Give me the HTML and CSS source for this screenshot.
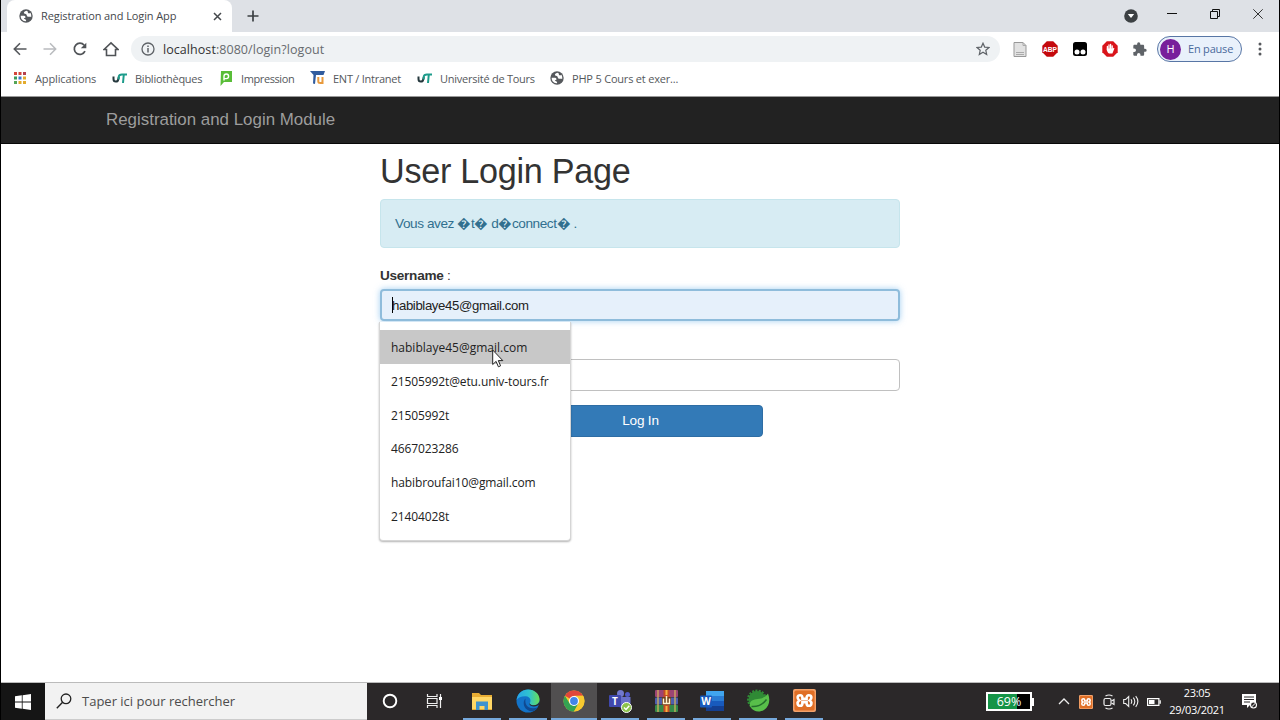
FILE: index.html
```html
<!DOCTYPE html>
<html lang="fr">
<head>
  <meta charset="UTF-8" />
  <title>Registration and Login App</title>
  <link rel="stylesheet" href="styles.css">
</head>
<body>

  <!-- Shared icons -->
  <svg class="defs" width="0" height="0">
    <symbol id="globe" viewBox="0 0 14 14">
      <circle cx="7" cy="7" r="6.7" fill="#56595d"/>
      <path d="M1.700 6.800C3.500 7 5.300 6.500 6.300 7.600c.8 1-.4 1.600-1.500 1.900.9.800 2 .9 2.300 1.700.2.500-.2 1-.8 1.100C3.500 12 1.500 9.600 1.700 6.800zM8 1.700C6.300 2 4.700 2.900 4.900 4c.2 1 1.900.8 2.500 1.500.7.8.2 1.600 1.100 2.100 1.100.5 2.400-.2 3.700.5.200-1.500.1-2.900-.9-4.300-.7.6-1.500.9-2.100.3-.6-.7.100-1.300-1.200-2.400z" fill="#fff"/>
    </symbol>
    <symbol id="ut" viewBox="0 0 16 12">
      <path d="M1.500 4.500v2.500c0 3.500 4.300 3.300 4.700.5L6.800 5" fill="none" stroke="#25383d" stroke-width="2"/>
      <path d="M6.700 7.500V5.500c0-2.300 1.300-3 3.300-3h5M11.800 2.500L11 11" fill="none" stroke="#1d9c8b" stroke-width="2"/>
    </symbol>
    <symbol id="xampp" viewBox="0 0 24 24">
      <rect width="24" height="24" rx="2" fill="#f3a26b"/>
      <rect x="1.500" y="1.500" width="21" height="21" rx="2" fill="#e06f26"/>
      <path d="M9.800 10.300h4.400V9.200c0-1.900 1-2.700 2.300-2.700 3.400 0 3.400 3.700 1 5.500 2.400 1.800 2.400 5.500-1 5.500-1.300 0-2.300-.8-2.300-2.700v-1.100H9.800v1.100c0 1.900-1 2.700-2.300 2.700-3.400 0-3.400-3.700-1-5.500-2.400-1.800-2.400-5.500 1-5.500 1.300 0 2.300.8 2.300 2.700z" fill="none" stroke="#fff" stroke-width="2.700"/>
    </symbol>
  </svg>

  <div class="window">

    <!-- Tabs -->
    <div class="tabs">
      <div class="tab">
        <svg class="favicon" width="14" height="14"><use href="#globe"/></svg>
        <span class="tab-title">Registration and Login App</span>
        <svg class="tab-close" width="9" height="9" viewBox="0 0 9 9"><path d="M1 1l7 7M8 1L1 8" stroke="#45484c" stroke-width="1.500"/></svg>
      </div>
      <svg class="new-tab" width="12" height="12" viewBox="0 0 12 12"><path d="M6 .5v11M.5 6h11" stroke="#3c4043" stroke-width="1.700"/></svg>
      <div class="controls">
        <svg width="14" height="14" viewBox="0 0 14 14"><circle cx="7" cy="7" r="6.800" fill="#3c4043"/><path d="M3.800 5h6.400L7 9z" fill="#fff"/></svg>
        <svg width="10" height="10" viewBox="0 0 10 10"><path d="M0 4.500h10" stroke="#111"/></svg>
        <svg width="10" height="10" viewBox="0 0 10 10"><path d="M.5 2.500h7v7h-7zM2.500 2.500v-2h7v7h-2" fill="none" stroke="#111"/></svg>
        <svg width="10" height="10" viewBox="0 0 10 10"><path d="M.3.300l9.400 9.400M9.700.300L.3 9.700" stroke="#333"/></svg>
      </div>
    </div>

    <!-- Address bar -->
    <div class="toolbar">
      <div class="nav-icons">
        <svg width="14" height="14" viewBox="0 0 14 14"><path d="M13.500 7H1.500M7 1.300L1.300 7 7 12.700" fill="none" stroke="#55585c" stroke-width="1.600"/></svg>
        <svg width="14" height="14" viewBox="0 0 14 14"><path d="M.5 7h12M7 1.300L12.700 7 7 12.700" fill="none" stroke="#b9bbbe" stroke-width="1.500"/></svg>
        <svg width="14" height="14" viewBox="0 0 14 14"><path d="M12 9.200A5.600 5.600 0 1 1 11.200 3.200" fill="none" stroke="#505357" stroke-width="1.700"/><path d="M13.300.7v5.500H7.800z" fill="#505357"/></svg>
        <svg width="16" height="16" viewBox="0 0 16 16"><path d="M1 8.500L8 1.800l7 6.700h-2.500v6h-9v-6H1z" fill="none" stroke="#505357" stroke-width="1.600"/></svg>
      </div>
      <div class="url">
        <svg width="14" height="14" viewBox="0 0 14 14"><circle cx="7" cy="7" r="6" fill="none" stroke="#5f6368" stroke-width="1.300"/><path d="M7 6v4.500M7 3.500V5" stroke="#5f6368" stroke-width="1.500"/></svg>
        <span class="address">localhost<i>:8080/login?logout</i></span>
        <svg width="14" height="14" viewBox="0 0 14 14"><path d="M7 1.200l1.700 3.900 4.300.4-3.200 2.800.9 4.200L7 10.300l-3.700 2.200.9-4.200L1 5.500l4.300-.4z" fill="none" stroke="#5f6368" stroke-width="1.200"/></svg>
      </div>
      <div class="extensions">
        <svg width="14" height="15" viewBox="0 0 14 15"><path d="M1 .5h9l3 3v11H1z" fill="#e2e2e2" stroke="#999"/><path d="M10 .5v3h3M3 10.500h8M3 12.500h8" fill="none" stroke="#aaa"/></svg>
        <svg width="16" height="16" viewBox="0 0 16 16"><path d="M4.800.3h6.400l4.500 4.500v6.400l-4.500 4.500H4.800L.3 11.200V4.800z" fill="#c4090d"/><text x="8" y="10.700" text-anchor="middle" textLength="14" lengthAdjust="spacingAndGlyphs" class="abp">ABP</text></svg>
        <svg width="14" height="14" viewBox="0 0 14 14"><rect width="14" height="14" rx="2.500"/><circle cx="4" cy="10" r="2.500" fill="#fff"/><circle cx="10" cy="10" r="2.500" fill="#fff"/></svg>
        <svg width="16" height="16" viewBox="0 0 16 16"><path d="M4.800.3h6.400l4.500 4.500v6.400l-4.500 4.500H4.800L.3 11.200V4.800z" fill="#d9151b"/><path d="M5.400 9V5.500M7 8.500V3.800M8.600 8.500V3.500M10.200 9V4.800" stroke="#fff" stroke-width="1.300" stroke-linecap="round"/><path d="M4.800 7.500h6.100l1-.8.500.8-2 5H7C5.500 11.500 4.800 10 4.800 7.500z" fill="#fff"/></svg>
        <svg width="14" height="14" viewBox="0 0 22 22"><path d="M19 10.500h-1.500v-4c0-1.100-.9-2-2-2h-4V3a2.500 2.500 0 0 0-5 0v1.500h-4c-1.100 0-2 .9-2 2v3.800H2a2.700 2.700 0 0 1 0 5.400H.5v3.800c0 1.100.9 2 2 2h3.800V20a2.700 2.700 0 0 1 5.400 0v1.500h3.800c1.100 0 2-.9 2-2v-4H19a2.500 2.500 0 0 0 0-5z" fill="#5f6368"/></svg>
      </div>
      <div class="profile">
        <span class="avatar">H</span>
        <span class="profile-text">En pause</span>
      </div>
      <svg class="menu-dots" width="4" height="14" viewBox="0 0 4 14"><circle cx="2" cy="2" r="1.500"/><circle cx="2" cy="7" r="1.500"/><circle cx="2" cy="12" r="1.500"/></svg>
    </div>

    <!-- Bookmarks -->
    <div class="bookmarks">
      <div class="bookmark apps">
        <svg width="14" height="14" viewBox="0 0 14 14">
          <path d="M1 1h3v3H1zM5.500 1h3v3h-3z" fill="#d4453b"/><path d="M10 1h3v3h-3z" fill="#b5404d"/>
          <path d="M1 5.500h3v3H1z" fill="#3c9a58"/><path d="M5.500 5.500h3v3h-3z" fill="#3c78c8"/><path d="M10 5.500h3v3h-3zM5.500 10h3v3h-3zM10 10h3v3h-3z" fill="#e3ab2c"/><path d="M1 10h3v3H1z" fill="#54a456"/>
        </svg>
        <span>Applications</span>
      </div>
      <div class="bookmark biblio">
        <svg width="16" height="12"><use href="#ut"/></svg>
        <span>Bibliothèques</span>
      </div>
      <div class="bookmark impression">
        <svg width="12" height="15" viewBox="0 0 12 15"><path d="M1 0h11v11H4l-3.500 4z" fill="#59bd38"/><path d="M4 9.500V5.300a2.300 2.300 0 1 1 2.300 2.300H4" fill="none" stroke="#fff" stroke-width="1.400"/></svg>
        <span>Impression</span>
      </div>
      <div class="bookmark ent">
        <svg width="15" height="14" viewBox="0 0 15 14"><path d="M0 0h15l-1.500 4H6L5 13 3 12.500 3.500 4z" fill="#315c9e"/><path d="M8.300 6v4.500c0 2 4.200 2 4.200 0V6M12.500 10v3" fill="none" stroke="#e89a3c" stroke-width="2"/></svg>
        <span>ENT / Intranet</span>
      </div>
      <div class="bookmark univ">
        <svg width="16" height="12"><use href="#ut"/></svg>
        <span>Université de Tours</span>
      </div>
      <div class="bookmark php">
        <svg width="14" height="14"><use href="#globe"/></svg>
        <span>PHP 5 Cours et exer...</span>
      </div>
    </div>

    <!-- Page -->
    <div class="navbar"><a class="navbar-brand">Registration and Login Module</a></div>
    <div class="page">
      <div class="login">
        <h1>User Login Page</h1>
        <div class="alert">Vous avez &#xFFFD;t&#xFFFD; d&#xFFFD;connect&#xFFFD; .</div>
        <div class="form-group">
          <label><b>Username</b> :</label>
          <div class="field focused">
            <span class="caret"></span><span class="value">habiblaye45@gmail.com</span>
            <div class="suggestions">
              <div class="option active"><span>habiblaye45@gmail.com</span></div>
              <div class="option"><span>21505992t@etu.univ-tours.fr</span></div>
              <div class="option"><span>21505992t</span></div>
              <div class="option"><span>4667023286</span></div>
              <div class="option"><span>habibroufai10@gmail.com</span></div>
              <div class="option"><span>21404028t</span></div>
              <svg class="cursor" width="12" height="19" viewBox="0 0 12 19"><path d="M.7 1v14.500l3.400-3.100 2.300 5.400 2.200-1-2.300-5.200h4.500z" fill="#fff" stroke="#222" stroke-width="1"/></svg>
            </div>
          </div>
        </div>
        <div class="field password"></div>
        <button class="login-btn">Log In</button>
      </div>
    </div>
  </div>

  <!-- Windows taskbar -->
  <div class="taskbar">
    <div class="start">
      <svg width="16" height="16" viewBox="0 0 16 16"><path d="M0 2.300l6.800-1v6.300H0zM7.600 1.200L16 0v7.600H7.600zM0 8.400h6.800v6.300l-6.800-1zM7.600 8.400H16V16l-8.400-1.200z" fill="#fff"/></svg>
    </div>
    <div class="search">
      <svg width="16" height="16" viewBox="0 0 16 16"><circle cx="10" cy="5.800" r="4.800" fill="none" stroke="#222" stroke-width="1.300"/><path d="M6.600 9.300L.8 15.200" stroke="#222" stroke-width="1.400"/></svg>
      <span>Taper ici pour rechercher</span>
    </div>
    <div class="app">
      <svg width="16" height="16" viewBox="0 0 16 16"><circle cx="8" cy="8" r="6.300" fill="none" stroke="#fff" stroke-width="1.900"/></svg>
    </div>
    <div class="app task-view">
      <svg width="17" height="16" viewBox="0 0 17 16"><path d="M1.500 1v2.500h9.500V1M1.500 15v-2.500h9.500V15M1.500 5.500h9.500v5h-9.500zM14.500 1v14" fill="none" stroke="#eee" stroke-width="1.200"/><path d="M13 4h3v3h-3z" fill="#fff"/></svg>
    </div>
    <div class="app open">
      <svg width="22" height="20" viewBox="0 0 22 20"><path d="M1 2h7l2 2h11v15H1z" fill="#e8ad34"/><path d="M1 6h20v12H1z" fill="#ffd766"/><path d="M5 10.500h12V19h-3.500v-4h-5v4H5z" fill="#3f93cf"/></svg>
    </div>
    <div class="app open">
      <svg width="24" height="24" viewBox="0 0 24 24">
        <defs>
          <linearGradient id="edgeTop" x1="0" x2="1"><stop offset="0" stop-color="#27a4e8"/><stop offset=".55" stop-color="#2fc3cf"/><stop offset="1" stop-color="#69df55"/></linearGradient>
        </defs>
        <circle cx="12" cy="12" r="11.500" fill="#1373c8"/>
        <path d="M.6 11C1.500 4.500 6.500.5 12.200.5c6.300 0 11.300 4.500 11.300 9.800 0 4-3 6-6 6-3.200 0-4.500-1.200-3.700-2.300 1.500-2 .8-6.500-4-6.800C5.500 7 2 8.500.6 11z" fill="url(#edgeTop)"/>
        <path d="M9.500 9.500c-3 3-2.500 10 4 12.500 3 1 6.500-.3 8.500-3.800-5 2.300-10.500.8-12-3-.8-2-.7-3.700-.5-5.700z" fill="#104a92"/>
        <path d="M23.500 15c-1.500 2-5.500 3.200-8.500 1.800-1.600-.7-1.800-1.800-1.200-2.800 0 1.500 2 2.300 4 2.300 2.200 0 4.500-1 5.700-3.500z" fill="#2b2829"/>
      </svg>
    </div>
    <div class="app open current">
      <svg width="22" height="22" viewBox="0 0 22 22">
        <circle cx="11" cy="11" r="10.500" fill="#f7c92f"/>
        <path d="M11 11L1.900 5.750A10.500 10.500 0 0 1 20.100 5.750L11 6z" fill="#e0463a"/>
        <path d="M1.900 5.750A10.500 10.500 0 0 0 11 21.500L15.500 13.500 11 11 6.700 13.500z" fill="#34a352"/>
        <path d="M11 5.800h9.100a10.500 10.500 0 0 1-9.100 15.700l4.500-8z" fill="#f7c92f"/>
        <circle cx="11" cy="11" r="5" fill="#fff"/><circle cx="11" cy="11" r="3.900" fill="#4285e8"/>
      </svg>
    </div>
    <div class="app open">
      <svg width="24" height="24" viewBox="0 0 24 24">
        <circle cx="12.500" cy="4.500" r="3.500" fill="#7178cf"/><circle cx="19.500" cy="5.500" r="2.500" fill="#5059c9"/>
        <path d="M9 8h13.500v6c0 3-2 5-4.500 5h-3c-4 0-6-3-6-6z" fill="#6970ca"/><rect x="1" y="6" width="12" height="12" rx="1" fill="#4048ad"/>
        <text x="7" y="15.500" text-anchor="middle" class="app-letter">T</text>
        <circle cx="18.500" cy="18.500" r="5" fill="#8bc34a" stroke="#fff"/><path d="M16 18.500l2 2 3.300-3.800" fill="none" stroke="#fff" stroke-width="1.400"/>
      </svg>
    </div>
    <div class="app open">
      <svg width="23" height="22" viewBox="0 0 23 22">
        <rect y="0" width="23" height="7" rx="1" fill="#9c4474"/><rect y="7.500" width="23" height="7" rx="1" fill="#4d5fae"/><rect y="15" width="23" height="7" rx="1" fill="#358a49"/>
        <path d="M3 0v22M20 0v22" stroke="#d2b05d" stroke-width="1.300"/><path d="M8.500 0h6v22h-6z" fill="#c74b22"/><path d="M7 7h9v8H7z" fill="#6d3d19"/><path d="M8.500 8.500v5h6v-5M11.500 6v8" fill="none" stroke="#fff2ce" stroke-width="1.500"/><path d="M11.500 0v5M11.500 16v6" stroke="#f5b343" stroke-width="2"/>
      </svg>
    </div>
    <div class="app open">
      <svg width="24" height="22" viewBox="0 0 24 22">
        <rect x="6" y="1" width="18" height="20" rx="1" fill="#2b7cd3"/><path d="M6 1h18v5H6z" fill="#41a5ee"/><path d="M6 11h18v5H6z" fill="#185abd"/><path d="M6 16h18v5H6z" fill="#143f91"/><rect x="0" y="5.500" width="12" height="12" rx="1" fill="#185abd"/>
        <text x="6" y="15" text-anchor="middle" class="app-letter">W</text>
      </svg>
    </div>
    <div class="app open">
      <svg width="24" height="24" viewBox="0 0 24 24">
        <circle cx="11" cy="10.500" r="8.500" fill="#2f8a35"/><circle cx="11" cy="10.500" r="8.800" fill="none" stroke="#2f8a35" stroke-width="2.400" stroke-dasharray="2 1.300"/>
        <path d="M22 4.500c2.500 6 1.500 13-4 16.500-5 2.800-11 1.500-13.500-3C2 13 6.500 10.500 11.500 10c5-.5 8-2 10.500-5.500z" fill="#58bf4a"/><path d="M5.500 17.500c6 .5 11-1.500 15-7" fill="none" stroke="#24702c" stroke-width="1.500"/>
      </svg>
    </div>
    <div class="app open">
      <svg width="23" height="23"><use href="#xampp"/></svg>
    </div>

    <div class="tray">
      <div class="battery"><span>69%</span></div>
      <svg class="chevron" width="12" height="7" viewBox="0 0 12 7"><path d="M1 6l5-5 5 5" fill="none" stroke="#eee" stroke-width="1.300"/></svg>
      <svg class="tray-xampp" width="14" height="14"><use href="#xampp"/></svg>
      <svg class="meet" width="12" height="16" viewBox="0 0 12 16"><rect x="1" y="4.500" width="7" height="7" rx="1.500" fill="none" stroke="#eee" stroke-width="1.200"/><path d="M8.500 7l2.500-1.500v5L8.500 9M2.500 2Q6 0 9.500 2M2.500 14q3.500 2 7 0" fill="none" stroke="#eee" stroke-width="1.200"/></svg>
      <svg class="volume" width="16" height="13" viewBox="0 0 16 13"><path d="M.7 4.500h2l3-3v10l-3-3h-2zM8 4.300q1.500 2.200 0 4.400M10.300 2.700q3 3.800 0 7.600M12.700 1.200q4.300 5.300 0 10.600" fill="none" stroke="#eee" stroke-width="1.100"/></svg>
      <svg class="power" width="14" height="8" viewBox="0 0 14 8"><path d="M.6.600h11.300v6.800H.6z" fill="none" stroke="#fff" stroke-width="1.200"/><path d="M2 2h5.500v4H2zM12.500 2.300h1.300v3.400h-1.300z" fill="#fff"/></svg>
      <div class="clock"><span class="time">23:05</span><span class="date">29/03/2021</span></div>
      <svg class="notif" width="17" height="17" viewBox="0 0 17 17"><path d="M1 1h14v11h-6l-3 3v-3H1z" fill="#fff"/><path d="M3 4h10M3 6.500h10M3 9h6" stroke="#2b2829"/><circle cx="12.500" cy="12" r="3" fill="#2b2829" stroke="#fff" stroke-width="1.100"/><path d="M10.500 14l4-4" stroke="#fff"/></svg>
    </div>
  </div>

</body>
</html>
```
FILE: styles.css
```css
* {
  margin: 0;
  padding: 0;
  box-sizing: border-box;
}

body {
  width: 1280px;
  height: 720px;
  overflow: hidden;
  display: flex;
  flex-direction: column;
  background: #fff;
  border-left: 1px solid #000;
  border-right: 1px solid #000;
  font-family: 'Open Sans', 'Noto Sans', sans-serif;
}

svg {
  display: block;
  flex: none;
}

.defs {
  position: absolute;
}

span, a {
  white-space: nowrap;
}

.window {
  flex: 1;
  min-height: 0;
  display: flex;
  flex-direction: column;
}

/* Tabs */
.tabs {
  height: 32px;
  background: #dee1e6;
  display: flex;
  align-items: center;
}

.tab {
  width: 225px;
  height: 32px;
  margin-left: 6px;
  padding: 0 10px 0 12px;
  background: #fff;
  border-radius: 8px 8px 0 0;
  display: flex;
  align-items: center;
}

.tab-title {
  margin-left: 8px;
  margin-top: -1px;
  font-size: 11px;
  letter-spacing: -0.1px;
  color: #45484c;
}

.tab-close {
  margin-left: auto;
}

.new-tab {
  margin-left: 15px;
}

.controls {
  margin-left: auto;
  margin-right: 16px;
  display: flex;
  align-items: center;
  gap: 33px;
}

.controls svg {
  margin-top: -5px;
}

.controls svg:first-child {
  margin-top: 0;
  margin-right: -4px;
}

/* Address bar */
.toolbar {
  height: 34px;
  display: flex;
  align-items: center;
}

.nav-icons {
  width: 130px;
  padding-left: 12px;
  display: flex;
  align-items: center;
  gap: 16px;
}

.url {
  width: 869px;
  height: 26px;
  padding: 0 10px;
  border-radius: 13px;
  background: #eff2f4;
  display: flex;
  align-items: center;
}

.address {
  flex: 1;
  margin-left: 8px;
  font-size: 12.5px;
  letter-spacing: 0.06px;
  color: #333;
}

.address i {
  font-style: normal;
  color: #686b6f;
}

.extensions {
  width: 157px;
  padding-left: 13px;
  display: flex;
  align-items: center;
  gap: 15px;
}

.abp {
  font: bold 6.5px 'Liberation Sans', sans-serif;
  fill: #fff;
}

.profile {
  width: 85px;
  height: 26px;
  padding-left: 2px;
  border: 1px solid #5876a5;
  border-radius: 13px;
  background: #e9f1fb;
  display: flex;
  align-items: center;
}

.avatar {
  width: 21px;
  height: 21px;
  border-radius: 50%;
  background: #781f9b;
  color: #fff;
  font-size: 11px;
  line-height: 20px;
  text-align: center;
}

.profile-text {
  margin-left: 7px;
  margin-top: -1px;
  font-size: 11px;
  letter-spacing: -0.2px;
  color: #49699b;
}

.menu-dots {
  margin-left: 16px;
  fill: #55585c;
}

/* Bookmarks */
.bookmarks {
  height: 31px;
  padding: 0 0 6px 12px;
  border-bottom: 1px solid #999;
  display: flex;
  align-items: center;
}

.bookmark {
  display: flex;
  align-items: center;
  gap: 8px;
  font-size: 11px;
  letter-spacing: -0.25px;
  color: #55585c;
}

.apps { width: 99px; letter-spacing: -0.12px; }
.biblio { width: 108px; gap: 7px; }
.impression { width: 90px; letter-spacing: -0.4px; gap: 9px; }
.ent { width: 107px; gap: 8px; }
.univ { width: 133px; gap: 7px; }
.php { letter-spacing: -0.2px; }

/* Page */
.navbar {
  height: 47px;
  padding-left: 105px;
  background: #222;
  border-bottom: 1px solid #080808;
  display: flex;
  align-items: center;
}

.navbar-brand {
  font-family: 'Liberation Sans', Arial, sans-serif;
  font-size: 16.9px;
  color: #9d9d9d;
}

.page {
  flex: 1;
  font-family: 'Liberation Sans', Arial, sans-serif;
  font-size: 13.6px;
  letter-spacing: -0.28px;
}

.login {
  width: 520px;
  margin-left: 379px;
  padding-top: 8px;
}

.login h1 {
  font-size: 34.2px;
  font-weight: normal;
  line-height: 38px;
  color: #333;
}

.alert {
  height: 49px;
  margin-top: 9px;
  padding-left: 14px;
  border: 1px solid #c6e5ec;
  border-radius: 4px;
  background: #d7ecf3;
  color: #31708f;
  letter-spacing: -0.42px;
  line-height: 47px;
}

.form-group {
  margin-top: 19px;
}

.form-group label {
  display: block;
  height: 22px;
  line-height: 18px;
  color: #333;
}

.field {
  height: 32px;
  border: 1px solid #c0c0c0;
  border-radius: 4px;
  display: flex;
  align-items: center;
}

.focused {
  position: relative;
  padding-left: 10px;
  border: 2px solid #8fbcdb;
  background: #e6f0fb;
  box-shadow: 0 0 6px rgba(102, 175, 233, 0.6);
  color: #222;
}

.value {
  margin-left: -1px;
  font-size: 13.2px;
  letter-spacing: -0.38px;
}

.caret {
  width: 1px;
  height: 16px;
  background: #000;
}

.password {
  margin-top: 38px;
}

.login-btn {
  display: block;
  width: 245px;
  height: 32px;
  margin: 14px 0 0 138px;
  padding-bottom: 1px;
  border: 1px solid #2e6da4;
  border-radius: 4px;
  background: #337ab7;
  color: #fff;
  font-family: 'Liberation Sans', Arial, sans-serif;
  font-size: 13.6px;
  letter-spacing: -0.2px;
}

/* Autofill dropdown */
.suggestions {
  position: absolute;
  top: 31px;
  left: -3px;
  width: 192px;
  height: 219px;
  padding-top: 8px;
  background: #fff;
  border: 1px solid #d5d5d5;
  border-top: none;
  border-radius: 0 0 4px 4px;
  box-shadow: 0 1px 2px rgba(0, 0, 0, 0.3);
  font-family: 'Open Sans', 'Noto Sans', sans-serif;
  font-size: 12px;
  letter-spacing: -0.11px;
  color: #222;
}

.option {
  height: 33.8px;
  padding-left: 11px;
  line-height: 35px;
}

.option.active {
  background: #c8c8c8;
  letter-spacing: 0;
}

.cursor {
  position: absolute;
  top: 27px;
  left: 112px;
}

/* Taskbar */
.taskbar {
  height: 38px;
  border-top: 1px solid #bbb;
  background: #2b2829;
  display: flex;
}

.start {
  width: 44px;
  background: #151515;
  display: flex;
  align-items: center;
  justify-content: center;
}

.search {
  width: 322px;
  padding-left: 11px;
  background: #f2f2f2;
  border-bottom: 1px solid #ccc;
  display: flex;
  align-items: center;
  gap: 10px;
  font-size: 13px;
  color: #4c4c4c;
}

.app {
  width: 46px;
  display: flex;
  align-items: center;
  justify-content: center;
  border-bottom: 2px solid transparent;
}

.task-view {
  padding-right: 3px;
}

.open {
  width: 38px;
  margin: 0 4px;
  border-bottom-color: #76a9dc;
}

.current {
  width: 46px;
  margin: 0;
  background: #514f50;
}

.app-letter {
  font: bold 10px 'Open Sans', sans-serif;
  fill: #fff;
}

.tray {
  flex: 1;
  padding-left: 159px;
  display: flex;
  align-items: center;
  color: #fff;
}

.battery {
  position: relative;
  width: 46px;
  height: 19px;
  border: 2px solid #fff;
  background: linear-gradient(90deg, #159447 69%, #000 69%);
  font-size: 12.5px;
  line-height: 15px;
  text-align: center;
}

.battery::after {
  content: "";
  position: absolute;
  right: -4px;
  top: 4px;
  width: 2px;
  height: 8px;
  background: #fff;
}

.chevron { margin-left: 26px; }
.tray-xampp { margin-left: 9px; }
.meet { margin-left: 10px; }
.volume { margin-left: 8px; }
.power { margin-left: 8px; }

.clock {
  width: 54px;
  margin-left: 9px;
  margin-top: -2px;
  display: flex;
  flex-direction: column;
  align-items: center;
  font-size: 11px;
  letter-spacing: -0.3px;
  line-height: 17px;
}

.notif {
  margin-left: 17px;
}
```
